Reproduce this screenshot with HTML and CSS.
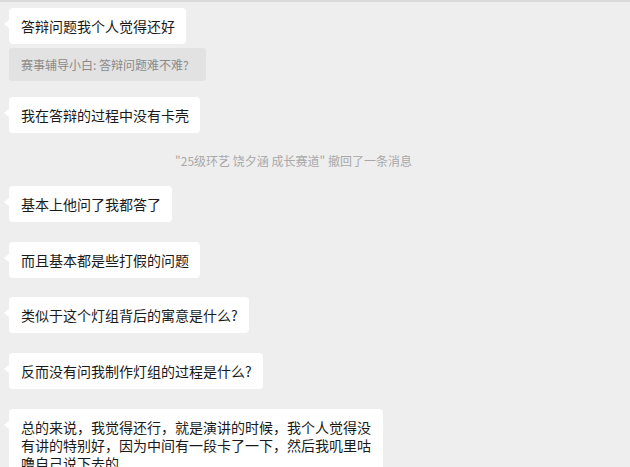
FILE: index.html
```html
<!DOCTYPE html>
<html lang="zh-CN">
<head>
<meta charset="utf-8">
<title>聊天记录</title>
<link rel="stylesheet" href="styles.css">
</head>
<body>
<div class="chat">
  <div class="bubble">答辩问题我个人觉得还好</div>
  <div class="quote">赛事辅导小白: 答辩问题难不难?</div>
  <div class="bubble gap-16">我在答辩的过程中没有卡壳</div>
  <div class="system">"25级环艺 饶夕涵 成长赛道" 撤回了一条消息</div>
  <div class="bubble gap-16">基本上他问了我都答了</div>
  <div class="bubble gap-20">而且基本都是些打假的问题</div>
  <div class="bubble gap-19">类似于这个灯组背后的寓意是什么?</div>
  <div class="bubble gap-20">反而没有问我制作灯组的过程是什么?</div>
  <div class="bubble gap-20">总的来说，我觉得还行，就是演讲的时候，我个人觉得没有讲的特别好，因为中间有一段卡了一下，然后我叽里咕噜自己说下去的</div>
</div>
</body>
</html>
```

FILE: styles.css
```css
html, body {
  margin: 0;
  padding: 0;
}
body {
  background: #eeeeee;
  border-top: 2px solid #dadada;
  font-family: "Noto Sans CJK SC", "Microsoft YaHei", sans-serif;
  height: 465px;
  overflow: hidden;
}
.chat {
  display: flex;
  flex-direction: column;
  align-items: flex-start;
  padding: 6px 0 0 9px;
}
.bubble {
  position: relative;
  background: #ffffff;
  color: #1a1a1a;
  font-size: 14px;
  line-height: 18px;
  padding: 9px 11px 9px 12px;
  border-radius: 4px;
  max-width: 374px;
  box-sizing: border-box;
}
.bubble::before {
  content: "";
  position: absolute;
  left: -5px;
  top: 12px;
  border-style: solid;
  border-width: 4px 5px 4px 0;
  border-color: transparent #ffffff transparent transparent;
}
.quote {
  margin-top: 4px;
  height: 33px;
  line-height: 33px;
  padding: 0 17px 0 12px;
  background: #e2e2e2;
  color: #8a8a8a;
  font-size: 12px;
  border-radius: 3px;
}
.system {
  align-self: stretch;
  margin-top: 19px;
  padding-right: 52px;
  text-align: center;
  font-size: 12px;
  line-height: 18px;
  color: #a8a8a8;
}
.gap-16 { margin-top: 16px; }
.gap-19 { margin-top: 19px; }
.gap-20 { margin-top: 20px; }
```
